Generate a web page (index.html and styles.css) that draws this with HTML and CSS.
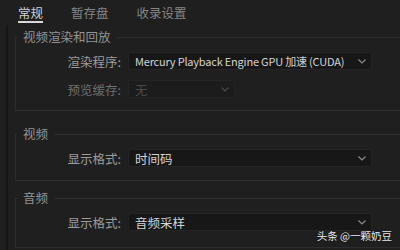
FILE: index.html
```html
<!DOCTYPE html>
<html lang="zh">
<head>
<meta charset="utf-8">
<link rel="stylesheet" href="styles.css">
</head>
<body>
<div class="tabs">
  <span class="tab active">常规</span>
  <span class="tab">暂存盘</span>
  <span class="tab">收录设置</span>
</div>
<div class="panel">
  <fieldset class="group g1">
    <legend>视频渲染和回放</legend>
    <div class="row">
      <span class="label">渲染程序:</span>
      <div class="select wide"><span class="value latin">Mercury Playback Engine GPU 加速 (CUDA)</span><svg class="chev" width="8" height="5" viewBox="0 0 8 5"><polyline points="0.5,0.5 4,4 7.5,0.5" fill="none" stroke="currentColor" stroke-width="1.2"/></svg></div>
    </div>
    <div class="row">
      <span class="label dim">预览缓存:</span>
      <div class="select narrow disabled"><span class="value">无</span><svg class="chev" width="8" height="5" viewBox="0 0 8 5"><polyline points="0.5,0.5 4,4 7.5,0.5" fill="none" stroke="currentColor" stroke-width="1.2"/></svg></div>
    </div>
  </fieldset>
  <fieldset class="group g2">
    <legend>视频</legend>
    <div class="row">
      <span class="label">显示格式:</span>
      <div class="select wide"><span class="value">时间码</span><svg class="chev" width="8" height="5" viewBox="0 0 8 5"><polyline points="0.5,0.5 4,4 7.5,0.5" fill="none" stroke="currentColor" stroke-width="1.2"/></svg></div>
    </div>
  </fieldset>
  <fieldset class="group g3">
    <legend>音频</legend>
    <div class="row">
      <span class="label">显示格式:</span>
      <div class="select wide"><span class="value">音频采样</span><svg class="chev" width="8" height="5" viewBox="0 0 8 5"><polyline points="0.5,0.5 4,4 7.5,0.5" fill="none" stroke="currentColor" stroke-width="1.2"/></svg></div>
    </div>
  </fieldset>
</div>
<div class="watermark">头条 @一颗奶豆</div>
</body>
</html>
```
FILE: styles.css
```css
html, body {
  margin: 0;
  padding: 0;
}
body {
  width: 400px;
  height: 250px;
  overflow: hidden;
  position: relative;
  background: #1f1f1f;
  font-family: "Noto Sans CJK SC", "Noto Sans", sans-serif;
  font-size: 12px;
  color: #9a9a9a;
}
.tabs {
  display: flex;
  gap: 28px;
  padding: 5px 0 0 18px;
  height: 25px;
  box-sizing: border-box;
}
.tab {
  line-height: 16px;
  font-size: 12.5px;
  color: #858585;
  height: 18px;
  box-sizing: border-box;
}
.tab.active {
  color: #d2d2d2;
  border-bottom: 2px solid #d8d8d8;
}
.panel {
  margin-left: 6px;
  border-left: 2px solid #161616;
  padding-top: 5px;
  padding-left: 7px;
  height: 230px;
}
.group {
  margin: 0 -20px 0 0;
  padding: 8px 0 12px 0;
  border: 1px solid #2d2d2d;
  min-width: 0;
}
.group legend {
  padding: 0 6px;
  margin-left: 1px;
  line-height: 14px;
  font-size: 12.5px;
  color: #939393;
}
.g2 { margin-top: 16px; padding-bottom: 13px; }
.g3 { margin-top: 10px; padding-bottom: 16px; }
.row {
  display: flex;
  align-items: center;
  height: 18px;
}
.row + .row {
  margin-top: 10px;
}
.label {
  width: 105px;
  text-align: right;
  color: #9c9c9c;
  font-size: 12.5px;
  padding-right: 7px;
}
.label.dim {
  color: #6e6e6e;
}
.select {
  height: 18px;
  box-sizing: border-box;
  background: #171717;
  border: 1px solid #242424;
  border-radius: 2px;
  display: flex;
  align-items: center;
  justify-content: space-between;
  padding: 0 5px 0 6px;
  color: #d4d4d4;
  font-size: 12.5px;
}
.select.wide { width: 244px; }
.select.narrow { width: 107px; }
.select.disabled {
  background: #1c1c1c;
  color: #4a4a4a;
}
.chev {
  color: #8a8a8a;
  flex-shrink: 0;
}
.select.disabled .chev {
  color: #4a4a4a;
}
.value {
  white-space: nowrap;
  overflow: hidden;
}
.value.latin {
  font-size: 11px;
  letter-spacing: -0.2px;
}
.watermark {
  position: absolute;
  right: 8px;
  bottom: 7px;
  font-size: 10.5px;
  color: #ececec;
  text-shadow: 0 0 2px rgba(0,0,0,0.6);
}
```
